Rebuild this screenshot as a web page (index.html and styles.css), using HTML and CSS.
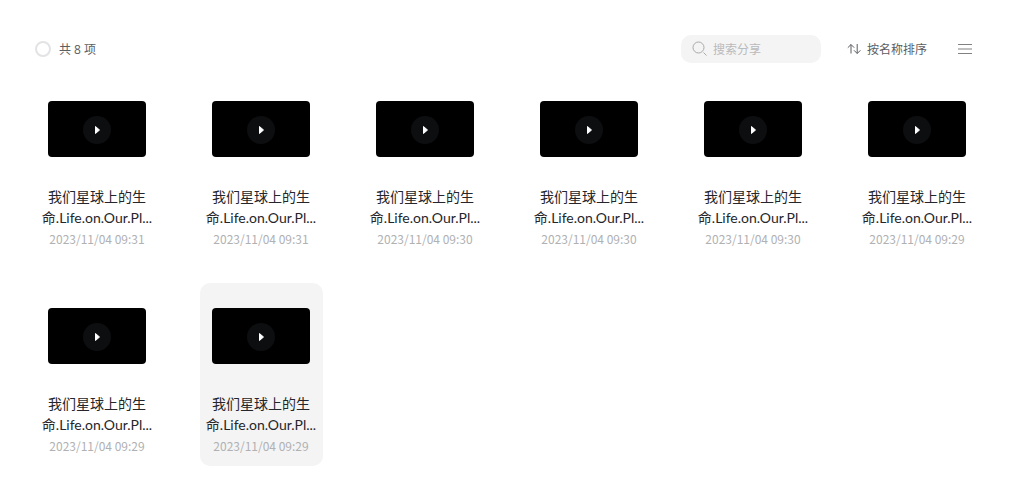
FILE: index.html
```
<!DOCTYPE html>
<html lang="zh-CN">

<head>
    <meta charset="UTF-8">
    <meta name="viewport" content="width=device-width, initial-scale=1">
    <title>分享</title>
    <link rel="stylesheet" href="styles.css">
</head>

<body>

    <header class="toolbar">
        <label class="select-all"><input type="checkbox" id="select-all"> 共 8 项</label>

        <div class="toolbar-actions">
            <label class="search">
                <svg width="16" height="16" viewBox="0 0 16 16" aria-hidden="true">
                    <circle cx="6.5" cy="6.5" r="5.5" />
                    <path d="M11.5 11.5L14.5 14.5" />
                </svg>
                <input type="text" placeholder="搜索分享" aria-label="搜索分享">
            </label>
            <button class="sort-btn" type="button">
                <svg width="14" height="12" viewBox="0 0 14 12" aria-hidden="true">
                    <path d="M4 10.5V1.5M0.8 4.7L4 1.5L7.2 4.7M10.2 1V10.5M7 7.3L10.2 10.5L13.4 7.3" />
                </svg>
                按名称排序
            </button>
            <button class="view-btn" type="button" aria-label="列表视图">
                <svg width="14" height="12" viewBox="0 0 14 12" aria-hidden="true">
                    <path d="M0 1.5H14M0 6H14M0 10.5H14" />
                </svg>
            </button>
        </div>
    </header>

    <main class="files" id="files"></main>

    <script>
        const files = document.getElementById('files');
        const dates = [
            '2023/11/04 09:31',
            '2023/11/04 09:31',
            '2023/11/04 09:30',
            '2023/11/04 09:30',
            '2023/11/04 09:30',
            '2023/11/04 09:29',
            '2023/11/04 09:29',
            '2023/11/04 09:29'
        ];

        dates.forEach((date, i) => {
            const card = document.createElement('article');
            card.className = i === 7 ? 'file active' : 'file';
            card.innerHTML = `
                <div class="file-thumb">
                    <span class="file-play">
                        <svg width="8" height="10" viewBox="0 0 8 10" aria-hidden="true">
                            <path d="M2.5 1.5L6.5 5L2.5 8.5Z" />
                        </svg>
                    </span>
                </div>
                <p class="file-name">我们星球上的生命.Life.on.Our.Pl...</p>
                <time class="file-date">${date}</time>`;
            files.appendChild(card);
        });
    </script>
</body>

</html>
```

FILE: styles.css
```
* {
    box-sizing: border-box;
}

body {
    margin: 0;
    padding: 35px 30px 0 36px;
    font-family: "Open Sans", "Noto Sans CJK SC", sans-serif;
    font-size: 12px;
    color: #25262b;
    background: #fff;
}

button,
input {
    font: inherit;
    color: inherit;
}

button {
    display: flex;
    align-items: center;
    padding: 0;
    border: none;
    background: none;
    cursor: pointer;
}

svg {
    flex: none;
    fill: none;
    stroke: currentColor;
}

.toolbar {
    display: flex;
    justify-content: space-between;
    align-items: center;
    height: 28px;
    margin-bottom: 13px;
    color: #5c5d61;
}

.select-all {
    display: flex;
    align-items: center;
    gap: 8px;
}

.select-all input {
    appearance: none;
    width: 16px;
    height: 16px;
    margin: 0 0 0 -1px;
    border: 2px solid #e3e3e5;
    border-radius: 50%;
}

.toolbar-actions {
    display: flex;
    align-items: center;
    padding-right: 7px;
}

.search {
    display: flex;
    align-items: center;
    gap: 5px;
    width: 140px;
    height: 28px;
    padding: 0 11px;
    border-radius: 10px;
    background: #f4f4f4;
    color: #a8a9ab;
}

.search input {
    width: 100%;
    min-width: 0;
    padding: 0;
    border: none;
    outline: none;
    background: none;
}

.search input::placeholder {
    color: #b9babc;
}

.sort-btn {
    gap: 6px;
    margin-left: 26px;
}

.view-btn {
    margin-left: 31px;
    color: #808183;
}

.files {
    display: grid;
    grid-template-columns: repeat(auto-fill, 123px);
    justify-content: space-between;
    gap: 24px;
}

.file {
    display: flex;
    flex-direction: column;
    align-items: center;
    padding: 25px 6px 10px 5px;
    border-radius: 10px;
}

.file.active {
    background: #f4f4f4;
}

.file-thumb {
    display: flex;
    justify-content: center;
    align-items: center;
    width: 98px;
    height: 56px;
    margin-bottom: 29px;
    border-radius: 4px;
    background: #000;
}

.file-play {
    display: flex;
    justify-content: center;
    align-items: center;
    width: 28px;
    height: 28px;
    margin-top: 2px;
    border-radius: 50%;
    background: #0d0e10;
    color: #fff;
}

.file-play svg {
    fill: currentColor;
    stroke-linejoin: round;
}

.file-name {
    width: 112px;
    margin: 0 0 1px;
    font-family: Lato, "Noto Sans CJK SC", sans-serif;
    font-size: 14px;
    line-height: 21px;
    text-align: center;
    word-break: break-all;
}

.file-date {
    font-family: "Noto Sans CJK SC", sans-serif;
    line-height: 20px;
    color: #b0b1b3;
}
```
